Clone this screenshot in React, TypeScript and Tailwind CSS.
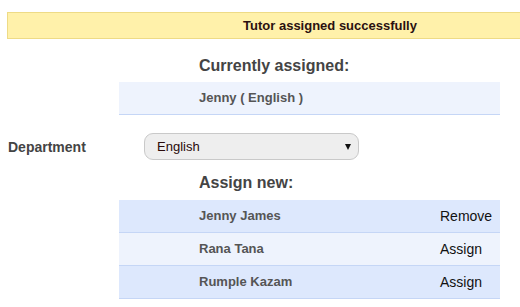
import React from "react";

const rows = [
  { name: "Jenny James", action: "Remove", dark: true },
  { name: "Rana Tana", action: "Assign", dark: false },
  { name: "Rumple Kazam", action: "Assign", dark: true },
];

export default function App() {
  return (
    <div className="w-[520px] h-[307px] overflow-hidden bg-white pt-3 font-['Liberation_Sans',Arial,sans-serif]">
      <div className="ml-[7px] w-[646px] h-[27px] border border-[#eedb86] bg-[#fff1aa] flex items-center justify-center text-[13px] font-bold text-[#2a1010]">
        Tutor assigned successfully
      </div>

      <div className="ml-[119px] w-[381px]">
        <div className="mt-[17px] pl-[80px] text-[16px] leading-[20px] font-bold text-[#444]">
          Currently assigned:
        </div>
        <div className="mt-[6px] h-[33px] border-b border-[#c5d6f6] bg-[#eef3fd] pl-[80px] flex items-center text-[13px] font-bold text-[#555]">
          Jenny ( English )
        </div>
      </div>

      <div className="mt-[18px] flex items-center">
        <div className="w-[144px] pl-2 pt-[2px] text-[14px] font-bold text-[#444]">Department</div>
        <div className="w-[215px] h-[27px] rounded-[9px] border border-[#c9c9c9] bg-[#eeeeee] flex items-center pl-3 pr-[7px] text-[13px] text-[#2a0a0a]">
          <span>English</span>
          <svg className="ml-auto" width="6" height="6" viewBox="0 0 6 6">
            <path d="M0 0 H6 L3 6 Z" fill="#111" />
          </svg>
        </div>
      </div>

      <div className="ml-[119px] w-[381px]">
        <div className="mt-[13px] pl-[80px] text-[16px] leading-[20px] font-bold text-[#444]">
          Assign new:
        </div>
        <div className="mt-[7px] flex flex-col">
          {rows.map((r) => (
            <div
              key={r.name}
              className={`h-[33px] border-b border-[#c5d6f6] flex items-center ${r.dark ? "bg-[#dde8fd]" : "bg-[#eef3fd]"}`}
            >
              <div className="pl-[80px] flex-1 text-[13px] font-bold text-[#555]">{r.name}</div>
              <div className="w-[68px] pl-2 text-[14px] text-[#111]">{r.action}</div>
            </div>
          ))}
        </div>
      </div>
    </div>
  );
}
